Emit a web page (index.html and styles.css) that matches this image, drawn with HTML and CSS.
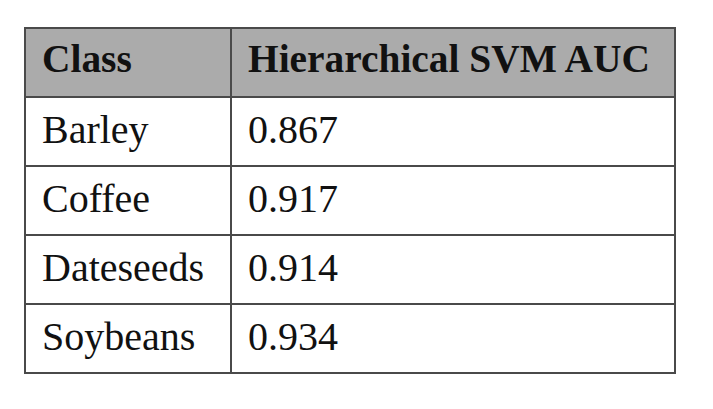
FILE: index.html
```html
<!DOCTYPE html>
<html>
<head>
<meta charset="utf-8">
<link rel="stylesheet" href="styles.css">
</head>
<body>
<table class="auc-table">
  <colgroup>
    <col class="col-class">
    <col class="col-auc">
  </colgroup>
  <thead>
    <tr class="head-row">
      <th>Class</th>
      <th>Hierarchical SVM AUC</th>
    </tr>
  </thead>
  <tbody>
    <tr><td>Barley</td><td>0.867</td></tr>
    <tr><td>Coffee</td><td>0.917</td></tr>
    <tr><td>Dateseeds</td><td>0.914</td></tr>
    <tr><td>Soybeans</td><td>0.934</td></tr>
  </tbody>
</table>
</body>
</html>
```

FILE: styles.css
```css
html, body {
  margin: 0;
  padding: 0;
  background: #ffffff;
}
body {
  padding: 27px 0 0 24px;
  font-family: "Liberation Serif", "DejaVu Serif", serif;
  color: #111111;
}
.auc-table {
  border-collapse: collapse;
  table-layout: fixed;
  width: 650px;
}
.col-class { width: 206px; }
.col-auc { width: 444px; }
.auc-table th,
.auc-table td {
  border: 2px solid #4a4a4a;
  height: 69px;
  padding: 0 0 0 16px;
  text-align: left;
  vertical-align: middle;
  font-size: 40px;
  line-height: 44px;
  white-space: nowrap;
  box-sizing: border-box;
}
.auc-table th {
  background: #ababab;
  font-weight: bold;
  font-size: 39.4px;
  padding-bottom: 8px;
}
.auc-table td {
  font-weight: normal;
  padding-bottom: 3px;
}
```
